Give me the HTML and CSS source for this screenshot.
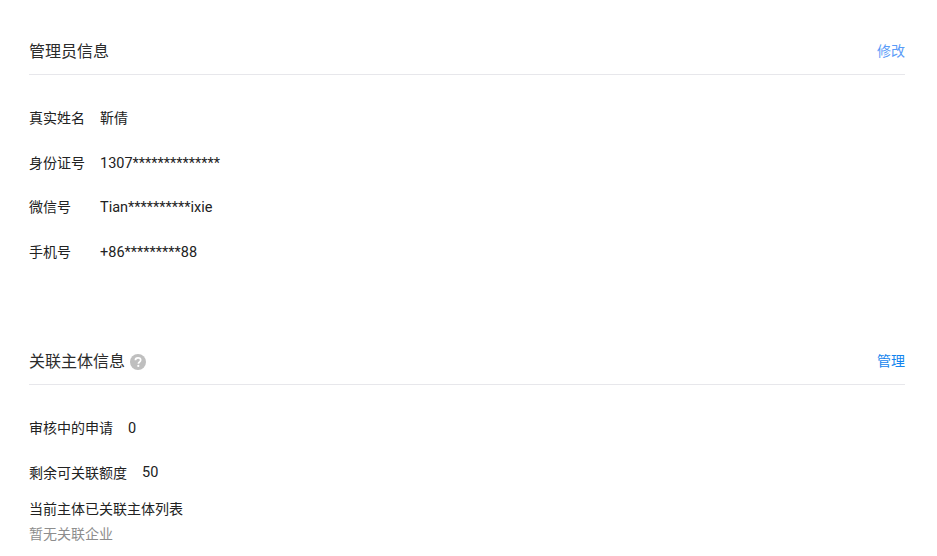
FILE: index.html
```html
<!DOCTYPE html>
<html lang="zh-CN">

<head>
    <meta charset="UTF-8">
    <meta name="viewport" content="width=device-width, initial-scale=1.0">
    <title>管理员信息</title>
    <link rel="stylesheet" href="styles.css">
</head>

<body>

    <div class="container">
        <div class="section admin">
            <div class="section-head">
                <h2>管理员信息</h2>
                <a class="link-light" href="#">修改</a>
            </div>
            <div class="info-row">
                <span class="label">真实姓名</span>
                <span class="value-cn">靳倩</span>
            </div>
            <div class="info-row">
                <span class="label">身份证号</span>
                <span class="value">1307**************</span>
            </div>
            <div class="info-row">
                <span class="label">微信号</span>
                <span class="value">Tian**********ixie</span>
            </div>
            <div class="info-row">
                <span class="label">手机号</span>
                <span class="value">+86*********88</span>
            </div>
        </div>

        <div class="section">
            <div class="section-head">
                <h2>关联主体信息
                    <svg class="help" width="16" height="16" viewBox="0 0 16 16">
                        <circle cx="8" cy="8" r="8" fill="#bfbfbf" />
                        <path d="M5.4 6.3C5.4 4.8 6.5 3.9 8 3.9s2.7.9 2.7 2.2c0 1.1-.6 1.6-1.4 2.1-.7.5-.9.8-.9 1.5" fill="none" stroke="#fff" stroke-width="1.7" />
                        <circle cx="8.3" cy="11.9" r="1.1" fill="#fff" />
                    </svg>
                </h2>
                <a class="link" href="#">管理</a>
            </div>
            <div class="info-row">
                <span class="label-auto">审核中的申请</span>
                <span class="value">0</span>
            </div>
            <div class="info-row">
                <span class="label-auto">剩余可关联额度</span>
                <span class="value">50</span>
            </div>
            <div class="list-title">当前主体已关联主体列表</div>
            <div class="empty">暂无关联企业</div>
        </div>
    </div>

</body>

</html>
```

FILE: styles.css
```css
body {
    font-family: Roboto, "Noto Sans CJK SC", sans-serif;
    margin: 0;
    padding: 0;
    background-color: #fff;
    color: #222;
    font-size: 14px;
}

.container {
    padding: 28px 32px 0 29px;
}

.section-head {
    display: flex;
    justify-content: space-between;
    align-items: center;
    height: 46px;
    border-bottom: 1px solid #e7e7eb;
    margin-bottom: 21px;
}

h2 {
    display: flex;
    align-items: center;
    gap: 5px;
    margin: 0;
    padding-bottom: 2px;
    font-size: 16px;
    font-weight: 400;
    color: #2b2b2b;
}

.help {
    margin-top: 4px;
}

.link,
.link-light {
    padding-bottom: 2px;
    text-decoration: none;
    color: #1485ee;
}

.link-light {
    color: #5a9cf8;
}

.info-row {
    display: flex;
    align-items: center;
    height: 44.5px;
}

.label,
.label-auto,
.value-cn {
    padding-bottom: 2px;
}

.label {
    width: 71px;
}

.label-auto {
    margin-right: 15px;
}

.value {
    font-size: 14.5px;
}

.admin {
    height: 310px;
}

.admin .value {
    padding-top: 1px;
}

.list-title {
    margin-top: 3px;
    line-height: 22px;
}

.empty {
    color: #8d8d8d;
    line-height: 28px;
}
```
